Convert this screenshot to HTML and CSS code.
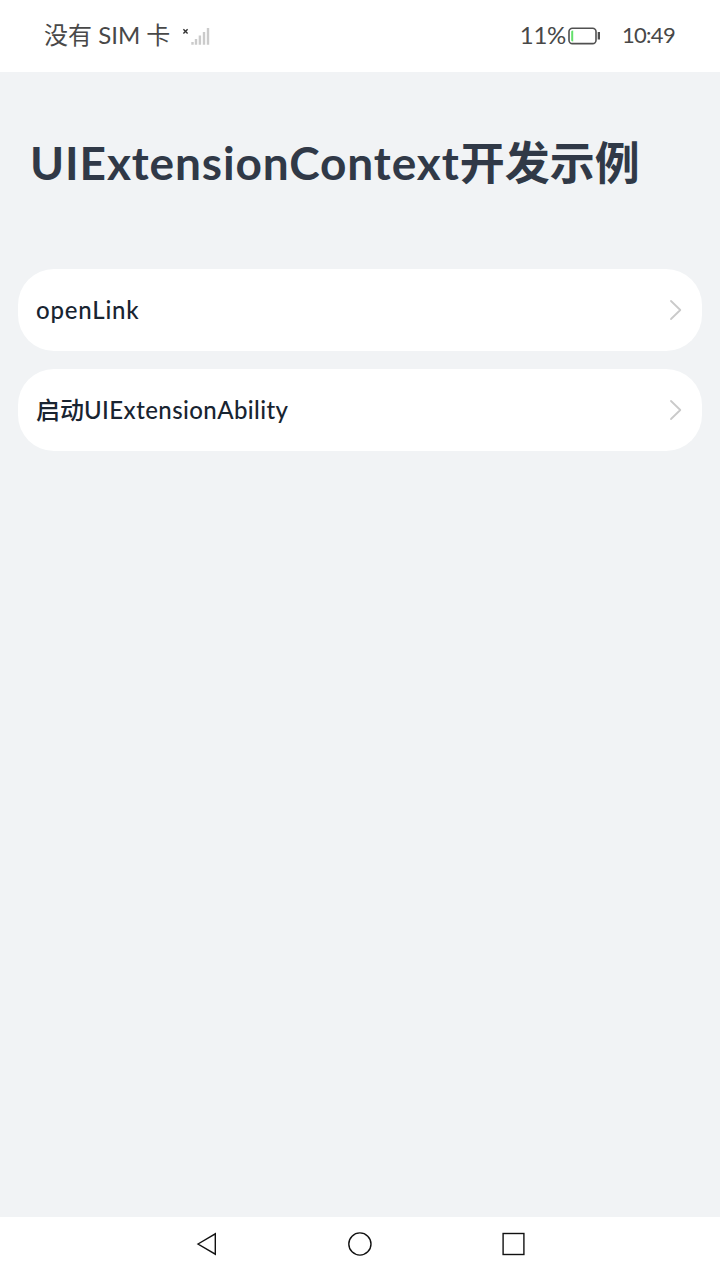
FILE: index.html
```html
<!DOCTYPE html>
<html lang="zh-CN">
<head>
<meta charset="utf-8">
<title>UIExtensionContext开发示例</title>
<link rel="stylesheet" href="styles.css">
</head>
<body>
<div class="screen">
  <header class="status">
    <span class="carrier">没有 <span class="sim">SIM</span> 卡</span>
    <svg class="signal" width="28" height="20" viewBox="0 0 28 20">
      <path d="M1.4 3.3l4.2 4.2M5.6 3.3L1.4 7.5" stroke="#333" stroke-width="1.4"/>
      <path d="M10.5 18.8v-2.8M14 18.8v-5.8M17.9 18.8V9.5M22 18.8V6M26 18.8V2" stroke="#cbcbcb" stroke-width="2.4"/>
    </svg>
    <span class="percent">11%</span>
    <svg class="battery" width="34" height="18" viewBox="0 0 34 18">
      <rect x="1" y="1.2" width="27" height="15.4" rx="3.4" fill="none" stroke="#505050" stroke-width="1.6"/>
      <path d="M3.2 4.5q0-1 2-1v11q-2 0-2-1z" fill="#64e06c"/>
      <path d="M29.7 5h2.3v7.5h-2.3z" fill="#505050"/>
    </svg>
    <time class="clock">10:49</time>
  </header>
  <main class="content">
    <h1 class="title"><span class="title-latin">UIExtensionContext</span>开发示例</h1>
    <div class="list">
      <div class="row"><span class="label open-link">openLink</span>
        <svg class="chevron" width="14" height="22" viewBox="0 0 14 22"><path d="M2 2l9.3 9L2 20" fill="none" stroke="#cacaca" stroke-width="1.8" stroke-linecap="round" stroke-linejoin="round"/></svg>
      </div>
      <div class="row"><span class="label">启动<span class="ability">UIExtensionAbility</span></span>
        <svg class="chevron" width="14" height="22" viewBox="0 0 14 22"><path d="M2 2l9.3 9L2 20" fill="none" stroke="#cacaca" stroke-width="1.8" stroke-linecap="round" stroke-linejoin="round"/></svg>
      </div>
    </div>
  </main>
  <nav class="nav">
    <svg width="26" height="26" viewBox="0 0 26 26"><path d="M5 13L22.3 2.8v20.4z"/></svg>
    <svg width="26" height="26" viewBox="0 0 26 26"><circle cx="12.9" cy="13" r="11.1"/></svg>
    <svg width="26" height="26" viewBox="0 0 26 26"><rect x="2.1" y="2.5" width="20.8" height="21"/></svg>
  </nav>
</div>
</body>
</html>
```
FILE: styles.css
```css
* { box-sizing: border-box; }
body { margin: 0; font-family: Lato, "Noto Sans CJK SC", sans-serif; }
.screen { width: 720px; height: 1280px; display: flex; flex-direction: column; background: #f1f3f5; }
.status { height: 72px; background: #fff; display: flex; align-items: center; padding: 0 45px 0 44px; color: #484848; font-size: 24px; line-height: 36px; white-space: nowrap; }
.carrier { width: 138px; padding-bottom: 2px; }
.signal { flex: none; }
.percent { margin-left: auto; padding-bottom: 2px; letter-spacing: -0.3px; }
.battery { flex: none; margin-left: 2px; }
.clock { font-size: 22px; margin-left: 20px; padding-bottom: 2px; letter-spacing: -0.7px; }
.content { flex: 1; padding: 60px 18px 0; }
.title { margin: 0; padding-left: 12px; height: 137px; line-height: 62px; font-size: 45px; font-weight: 700; color: #303947; white-space: nowrap; }
.title-latin { font-size: 46px; letter-spacing: 0.88px; }
.list { display: flex; flex-direction: column; gap: 18px; }
.row { height: 82px; background: #fff; border-radius: 36px; padding: 0 19px 0 18px; display: flex; align-items: center; justify-content: space-between; }
.label { font-size: 24px; font-weight: 500; line-height: 36px; color: #182431; white-space: nowrap; }
.open-link { letter-spacing: 0.8px; }
.ability { letter-spacing: 0.42px; }
.nav { height: 63px; background: #fff; padding: 14px 193px 0; display: flex; justify-content: space-between; }
.nav svg { fill: none; stroke: #111; stroke-width: 1.4; }
```
